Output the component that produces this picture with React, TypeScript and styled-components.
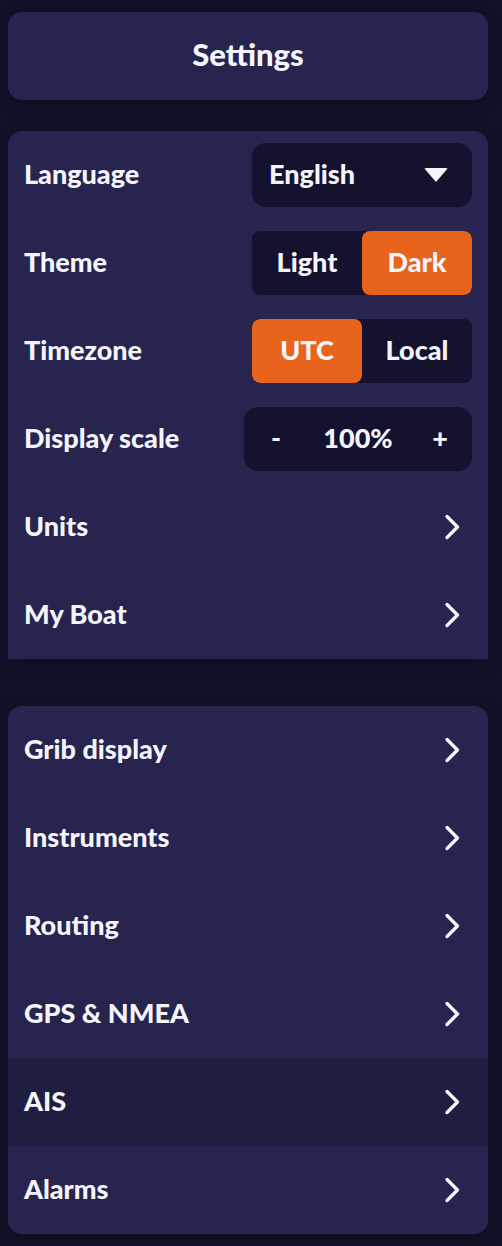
import React from 'react'
import styled, { createGlobalStyle } from 'styled-components'

const GlobalStyle = createGlobalStyle`
  html, body {
    margin: 0;
    padding: 0;
    background: #12112a;
  }
  body {
    font-family: Lato, "Noto Sans", sans-serif;
    color: #f4f5fb;
  }
`

const Page = styled.div`
  width: 502px;
  min-height: 1246px;
  box-sizing: border-box;
  padding: 12px 14px 10px 8px;
  display: flex;
  flex-direction: column;
`

const Header = styled.div`
  height: 88px;
  box-sizing: border-box;
  padding-bottom: 5px;
  border-radius: 14px;
  background: #27244f;
  display: flex;
  align-items: center;
  justify-content: center;
  font-size: 31px;
  font-weight: 900;
  box-shadow: 0 4px 18px rgba(0, 0, 0, 0.35);
`

const Card = styled.div<{ $flatBottom?: boolean; $top: number }>`
  margin-top: ${({ $top }) => $top}px;
  background: #27244f;
  border-radius: ${({ $flatBottom }) => ($flatBottom ? '14px 14px 0 0' : '14px')};
  overflow: hidden;
  box-shadow: 0 4px 18px rgba(0, 0, 0, 0.35);
`

const Row = styled.div<{ $active?: boolean }>`
  height: 88px;
  box-sizing: border-box;
  padding: 0 16px;
  display: flex;
  align-items: center;
  justify-content: space-between;
  background: ${({ $active }) => ($active ? '#1f1d40' : 'transparent')};
`

const Label = styled.span`
  font-size: 27px;
  font-weight: 900;
  margin-top: -3px;
`

const Select = styled.div`
  width: 220px;
  height: 64px;
  box-sizing: border-box;
  padding: 0 24px 3px 17px;
  border-radius: 14px;
  background: #14122e;
  display: flex;
  align-items: center;
  justify-content: space-between;
  font-size: 27px;
  font-weight: 900;
`

const Caret = styled.span`
  width: 0;
  height: 0;
  margin-top: 3px;
  border-left: 12px solid transparent;
  border-right: 12px solid transparent;
  border-top: 14px solid #f4f5fb;
  border-radius: 2px;
`

const Segmented = styled.div`
  width: 220px;
  height: 64px;
  border-radius: 8px;
  background: #14122e;
  display: flex;
  overflow: hidden;
`

const Segment = styled.div<{ $on?: boolean }>`
  flex: 1;
  display: flex;
  align-items: center;
  justify-content: center;
  padding-bottom: 3px;
  border-radius: 8px;
  font-size: 27px;
  font-weight: 900;
  background: ${({ $on }) => ($on ? '#e8631c' : 'transparent')};
`

const Stepper = styled.div`
  width: 228px;
  height: 64px;
  box-sizing: border-box;
  padding: 0 24px 3px;
  border-radius: 14px;
  background: #14122e;
  display: flex;
  align-items: center;
  justify-content: space-between;
  font-size: 27px;
  font-weight: 900;
`

const StepBtn = styled.span`
  width: 16px;
  text-align: center;
`

const Chevron = () => (
  <svg width="18" height="26" viewBox="0 0 18 26" style={{ marginRight: 10 }}>
    <path d="M3 2.5 L13.5 13 L3 23.5" fill="none" stroke="#f4f5fb" strokeWidth="3.4" strokeLinecap="round" strokeLinejoin="round" />
  </svg>
)

const firstLinks = ['Units', 'My Boat']
const secondLinks = ['Grib display', 'Instruments', 'Routing', 'GPS & NMEA', 'AIS', 'Alarms']

export default function App() {
  return (
    <Page>
      <GlobalStyle />
      <Header>Settings</Header>

      <Card $top={31} $flatBottom>
        <Row>
          <Label>Language</Label>
          <Select>
            English
            <Caret />
          </Select>
        </Row>
        <Row>
          <Label>Theme</Label>
          <Segmented>
            <Segment>Light</Segment>
            <Segment $on>Dark</Segment>
          </Segmented>
        </Row>
        <Row>
          <Label>Timezone</Label>
          <Segmented>
            <Segment $on>UTC</Segment>
            <Segment>Local</Segment>
          </Segmented>
        </Row>
        <Row>
          <Label>Display scale</Label>
          <Stepper>
            <StepBtn>-</StepBtn>
            <span>100%</span>
            <StepBtn>+</StepBtn>
          </Stepper>
        </Row>
        {firstLinks.map((l) => (
          <Row key={l}>
            <Label>{l}</Label>
            <Chevron />
          </Row>
        ))}
      </Card>

      <Card $top={47}>
        {secondLinks.map((l) => (
          <Row key={l} $active={l === 'AIS'}>
            <Label>{l}</Label>
            <Chevron />
          </Row>
        ))}
      </Card>
    </Page>
  )
}
